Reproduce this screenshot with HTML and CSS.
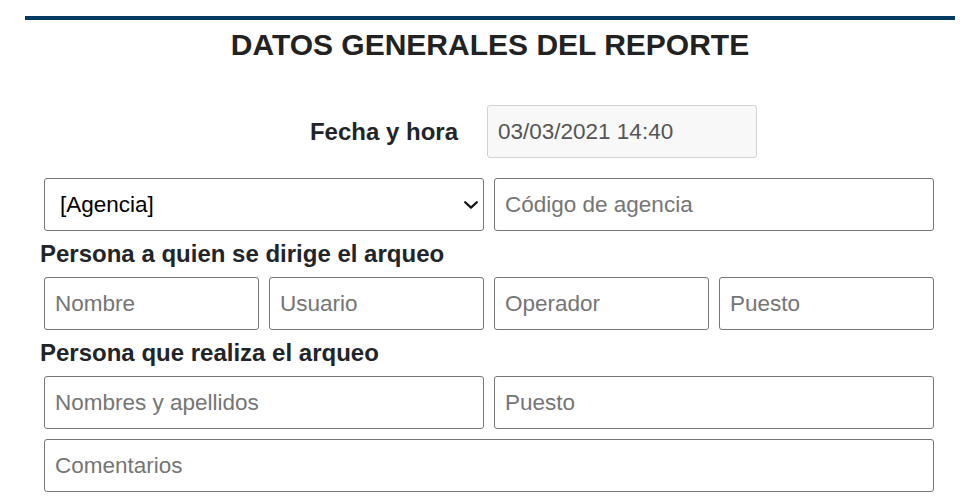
FILE: index.html
```html
<!DOCTYPE html>
<html lang="es">
<head>
<meta charset="utf-8">
<title>Datos generales del reporte</title>
<link rel="stylesheet" href="styles.css">
</head>
<body>
<div class="page">
  <div class="bar"></div>
  <h1 class="title">DATOS GENERALES DEL REPORTE</h1>
  <form class="form">
    <div class="fecha-row">
      <label class="fecha-label" for="fecha">Fecha y hora</label>
      <input class="field field-readonly" id="fecha" type="text" value="03/03/2021 14:40" readonly>
    </div>
    <div class="row row-2 row-first">
      <div class="select-wrap">
        <select class="field field-select">
          <option>[Agencia]</option>
        </select>
        <svg class="chevron" width="14" height="8" viewBox="0 0 14 8" aria-hidden="true">
          <path d="M1.2 1.2 L7 6.6 L12.8 1.2" fill="none" stroke="#111" stroke-width="2.2" stroke-linecap="round" stroke-linejoin="round"/>
        </svg>
      </div>
      <input class="field" type="text" placeholder="Código de agencia">
    </div>
    <div class="section-label">Persona a quien se dirige el arqueo</div>
    <div class="row row-4">
      <input class="field" type="text" placeholder="Nombre">
      <input class="field" type="text" placeholder="Usuario">
      <input class="field" type="text" placeholder="Operador">
      <input class="field" type="text" placeholder="Puesto">
    </div>
    <div class="section-label">Persona que realiza el arqueo</div>
    <div class="row row-2">
      <input class="field" type="text" placeholder="Nombres y apellidos">
      <input class="field" type="text" placeholder="Puesto">
    </div>
    <div class="row row-1 row-gap">
      <input class="field" type="text" placeholder="Comentarios">
    </div>
  </form>
</div>
</body>
</html>
```
FILE: styles.css
```css
html, body {
  margin: 0;
  padding: 0;
  background: #ffffff;
}

body {
  font-family: "Liberation Sans", Arial, sans-serif;
  color: #212529;
}

.page {
  width: 930px;
  margin-left: 25px;
  padding-top: 16px;
}

.bar {
  height: 4px;
  background: #023a62;
}

.title {
  margin: 7px 0 0;
  font-size: 30px;
  line-height: 36px;
  font-weight: 700;
  text-align: center;
  color: #222222;
}

.form {
  margin: 42px 0 0 19px;
  width: 890px;
}

.fecha-row {
  display: grid;
  grid-template-columns: 443px 270px;
  align-items: center;
}

.fecha-label {
  text-align: right;
  padding-right: 29px;
  font-size: 24px;
  font-weight: 700;
  line-height: 29px;
  color: #212529;
}

.field {
  box-sizing: border-box;
  width: 100%;
  height: 53px;
  margin: 0;
  padding: 0 10px;
  border: 1px solid #767676;
  border-radius: 3px;
  background: #ffffff;
  font-family: "Liberation Sans", Arial, sans-serif;
  font-size: 22.5px;
  color: #111111;
  outline: none;
}

.field::placeholder {
  color: #757575;
  opacity: 1;
}

.field-readonly {
  background: #f8f8f8;
  border-color: #d2d2d2;
  color: #555555;
}

.row {
  display: grid;
  column-gap: 10px;
}

.row-first {
  margin-top: 20px;
}

.row-1 { grid-template-columns: 1fr; }
.row-2 { grid-template-columns: 1fr 1fr; }
.row-4 { grid-template-columns: repeat(4, 1fr); }

.row-gap {
  margin-top: 10px;
}

.select-wrap {
  position: relative;
}

.field-select {
  appearance: none;
  -webkit-appearance: none;
  padding-left: 15px;
  padding-right: 30px;
  color: #000000;
}

.chevron {
  position: absolute;
  right: 6px;
  top: 23px;
  pointer-events: none;
}

.section-label {
  margin: 8px 0 9px -4px;
  font-size: 24px;
  font-weight: 700;
  line-height: 29px;
  color: #212529;
}
```
